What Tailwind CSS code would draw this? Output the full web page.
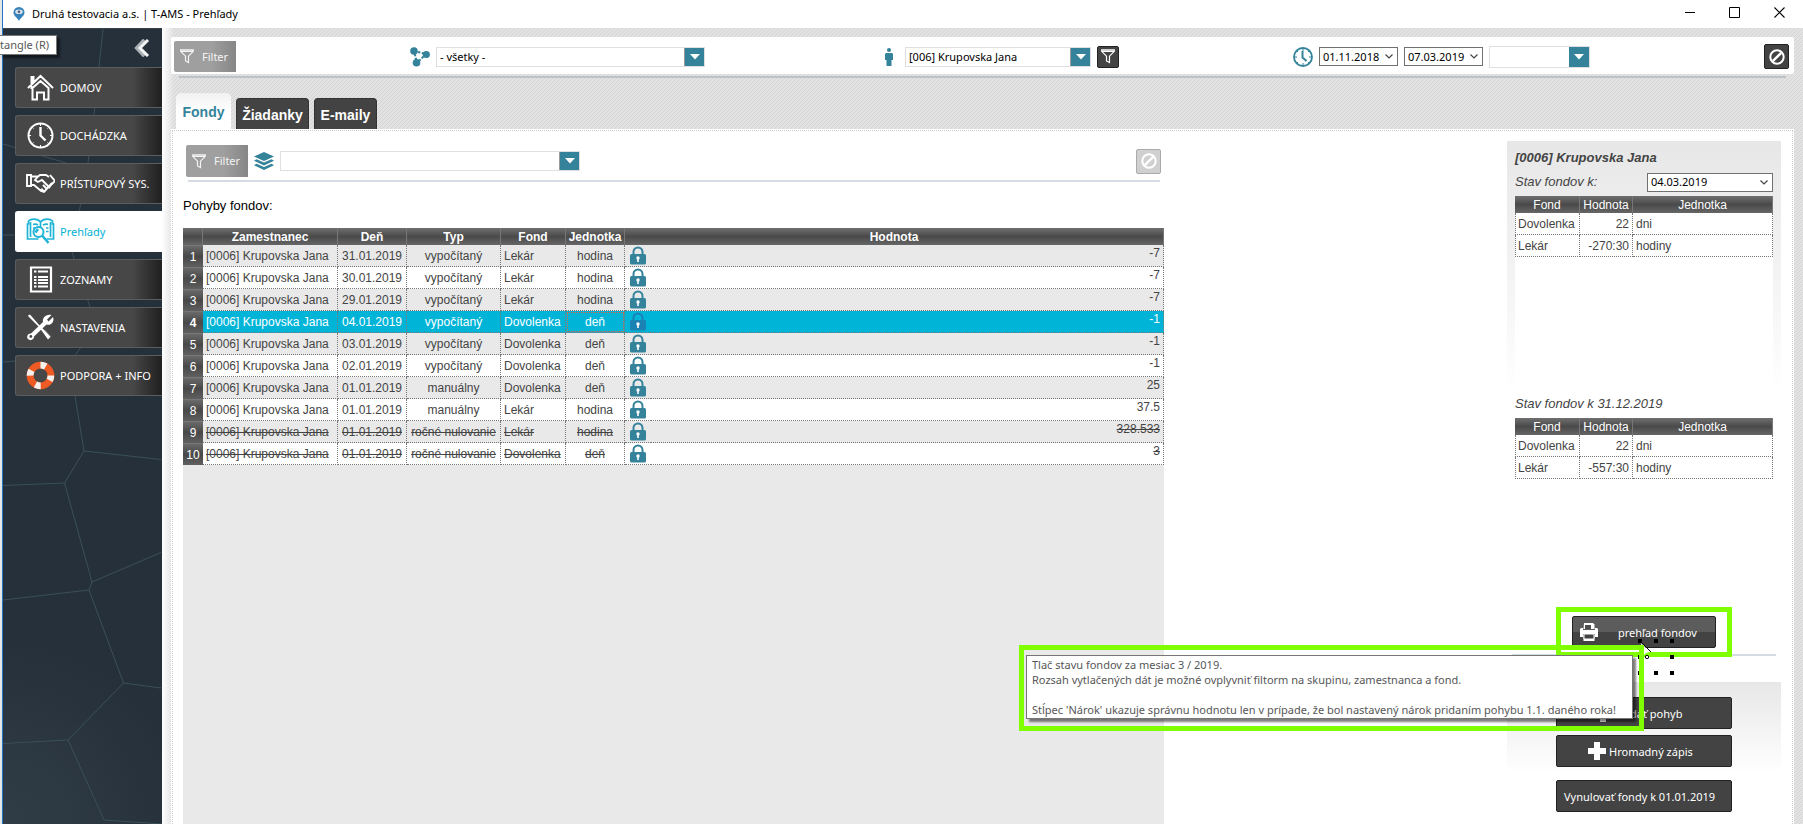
<!DOCTYPE html>
<html lang="sk">
<head>
<meta charset="utf-8">
<title>Druhá testovacia a.s. | T-AMS - Prehľady</title>
<script src="https://cdn.jsdelivr.net/npm/@tailwindcss/browser@4"></script>
</head>
<body class="font-['Noto_Sans',sans-serif] text-[11px] leading-4 text-black">
<svg class="hidden" aria-hidden="true">
  <symbol id="lock" viewBox="0 0 16 19"><path d="M3.500 9V6a4.500 4.500 0 0 1 9 0v3" fill="none" stroke="currentColor" stroke-width="2"/><rect x="0" y="8" width="16" height="10.500" rx="1.500" fill="currentColor"/><circle cx="8" cy="12" r="1.700" fill="#fff"/><path d="M7.200 12h1.600v4H7.200z" fill="#fff"/></symbol>
  <symbol id="funnel" viewBox="0 0 14 15"><path d="M.7.8h12.600v1.500L8.500 7.200v6.300l-3-1.500V7.200L.7 2.300z M1 2.400h12" fill="none" stroke="currentColor" stroke-width="1.200"/></symbol>
  <symbol id="ban" viewBox="0 0 16 16"><circle cx="8" cy="8" r="6.700" fill="none" stroke="currentColor" stroke-width="2"/><path d="M3.800 12.200 12.200 3.800" stroke="currentColor" stroke-width="2.400"/></symbol>
  <symbol id="tri" viewBox="0 0 10 6"><path d="M0 0h10L5 5.500z" fill="#fff"/></symbol>
  <symbol id="chev" viewBox="0 0 8 5"><path d="M.5.500 4 4 7.500.500" fill="none" stroke="#444" stroke-width="1.200"/></symbol>
  <symbol id="plus" viewBox="0 0 18 18"><path d="M6 0h6v6h6v6h-6v6H6v-6H0V6h6z" fill="#fff"/></symbol>
</svg>
<div class="flex min-h-screen">
  <div class="w-[3px] shrink-0 border-r border-[#1f74c4] bg-[#e6e6e6]"></div>
  <div class="flex min-w-0 flex-1 flex-col">
    <header class="flex h-7 items-center bg-white pl-[10px] pr-[18px]">
      <svg class="h-[14px] w-3" viewBox="0 0 12 14"><path d="M6 0a5.500 5.500 0 0 1 5.500 5.500C11.500 9 7 11 6 14 5 11 .5 9 .5 5.500A5.500 5.500 0 0 1 6 0z" fill="#3683ba"/><ellipse cx="6" cy="4.800" rx="3.800" ry="2.300" fill="#d8e4ea"/><circle cx="6" cy="4.800" r="1.300" fill="#557"/></svg>
      <h1 class="ml-[7px] whitespace-nowrap pb-px text-[11px] leading-5">Druhá testovacia a.s. | T-AMS - Prehľady</h1>
      <div class="ml-auto flex gap-[34px] pb-1">
        <button aria-label="Minimalizovať"><svg class="size-[11px]" viewBox="0 0 11 11"><path d="M1 5.500h10" stroke="#000"/></svg></button>
        <button aria-label="Maximalizovať"><svg class="size-[11px]" viewBox="0 0 11 11"><path d="M.5.500h10v10H.5z" fill="none" stroke="#000"/></svg></button>
        <button aria-label="Zavrieť"><svg class="size-[11px]" viewBox="0 0 11 11"><path d="m.5.500 10 10m0-10-10 10" stroke="#000" stroke-width="1.100"/></svg></button>
      </div>
    </header>
    <div class="flex flex-1">
      <nav class="relative w-[159px] shrink-0 overflow-hidden border-t border-[#39434d] bg-[radial-gradient(circle_at_0%_100%,#303d47,#26303b_180px)] pl-3 pt-[10px]" aria-label="Hlavné menu">
        <svg class="absolute left-0 top-0 h-[795px] w-[159px]" viewBox="3 29 159 795" fill="none" stroke="#3b5057"><path d="M103 29 99 67 94 115 88 163 72 252 90 307 94 330 70 362 75 396 84 451 161 459.500M84 451 64.500 483 3 485.500M64.500 483 92 582 161 552.500M92 582l-3 8L3 600M89 590l34.500 93 37.500 5M123.500 683 68 740 3 743.500M68 740l36 80 58 4M3 144l63 19M3 235h12M3 362l12-1"/></svg>
        <div class="relative flex flex-col">
          <button class="mr-[12px] self-end" aria-label="Zbaliť menu"><svg class="h-[18px] w-4" viewBox="0 0 16 18"><path d="M10.500 1 3 9l7.500 8" fill="none" stroke="#aab0b5" stroke-width="4"/><path d="M14 1 6 9l8 8" fill="none" stroke="#f2f2f2" stroke-width="3"/></svg></button>
          <div class="mt-[10px] flex flex-col gap-[7px] text-white [&>a]:flex [&>a]:h-[41px] [&>a]:items-center [&>a]:gap-[5px] [&>a]:rounded-l-[3px] [&>a]:border [&>a]:border-r-0 [&>a]:pl-[10px] [&_span]:whitespace-nowrap [&_span]:pt-px [&_svg]:size-[29px]">
            <a href="#" class="border-[#5b5d60] bg-linear-to-r from-[#474747] from-80% to-[#202020]"><svg viewBox="0 0 29 29"><path d="M2 15 14.500 3 27 15M5.500 16V4h2v6M6.500 15v11.500h4.500v-7h7v7h4.500V15L14.500 8z" fill="none" stroke="#fff" stroke-width="2"/></svg><span>DOMOV</span></a>
            <a href="#" class="border-[#5b5d60] bg-linear-to-r from-[#474747] from-80% to-[#202020]"><svg viewBox="0 0 29 29"><circle cx="14.500" cy="14.500" r="12" fill="none" stroke="#fff" stroke-width="2"/><path d="M14.500 6v8.500l5 5" fill="none" stroke="#fff" stroke-width="2.400"/><path d="M14.500 3v2M14.500 24v2M3 14.500h2M24 14.500h2M6.500 6.500l1 1M21.500 21.500l1 1M22.500 6.500l-1 1M6.500 22.500l1-1" stroke="#fff"/></svg><span>DOCHÁDZKA</span></a>
            <a href="#" class="border-[#5b5d60] bg-linear-to-r from-[#474747] from-80% to-[#202020]"><svg viewBox="0 0 29 29"><path d="M1 6h4v11H1zM5 7.500h7l2-1.500h6l3 2M5 16h3l7 6 3 1 8-9M12 7.500 9 11l3 2 4-2 8 8M24 6l5 6-5 5M15 22l2-2M18 23l-3-3M21 20l-4-4" fill="none" stroke="#fff" stroke-width="1.900"/></svg><span>PRÍSTUPOVÝ SYS.</span></a>
            <a href="#" aria-current="page" class="border-white bg-white text-[#00b1d5]"><svg viewBox="0 0 29 29" fill="none" stroke="#1db4d6" stroke-width="2"><path d="M14.500 5C11 1 5 1.500 2.500 4v3H1.500v15h11M14.500 5C18 1 24 1.500 26.500 4v3h1v15h-7M4.500 20V5M24.500 20V5M14.500 5v5M7 7.500q3-1 5 .5M7 11h2M17 8q3-1.500 5-.5M20 11h2.500M20 14.500h2.500" stroke-width="1.700"/><circle cx="12.500" cy="15" r="5"/><path d="m9.500 15.500 2.500-3.500M16.500 19l6 7" stroke-width="2.500"/></svg><span>Prehľady</span></a>
            <a href="#" class="border-[#5b5d60] bg-linear-to-r from-[#474747] from-80% to-[#202020]"><svg viewBox="0 0 29 29"><path d="M5 2.500h20v24H5z" fill="none" stroke="#fff" stroke-width="2.200"/><path d="M8 6.500h2.500M12 6.500h10M8 12h2.500M12 12h10M8 15h2.500M12 15h10M8 18h2.500M12 18h10M8 21.500h2.500M12 21.500h10" stroke="#fff" stroke-width="1.800"/></svg><span>ZOZNAMY</span></a>
            <a href="#" class="border-[#5b5d60] bg-linear-to-r from-[#474747] from-80% to-[#202020]"><svg viewBox="0 0 29 29"><path d="M2 2.500 4 1.500 14 13l11 10.500-3 3L13 14 2 3z" fill="#fff"/><path d="M19 17l6 7" stroke="#777" stroke-width="1"/><path d="M25.500 2 21 6.500l1.500 2 4.500-4.500c2 5-2.500 9-6.500 7.500L8 23.500c.5 3-4 5-6 2.500s0-6 3-5.500L17 9c-1-4 3-8.500 8.500-7z" fill="#fff"/><circle cx="4.800" cy="23.500" r="1.400" fill="#474747"/></svg><span>NASTAVENIA</span></a>
            <a href="#" class="border-[#5b5d60] bg-linear-to-r from-[#474747] from-80% to-[#202020]"><svg viewBox="0 0 29 29"><circle cx="14.500" cy="14.500" r="10.400" fill="none" stroke="#ee5a24" stroke-width="6.800"/><circle cx="14.500" cy="14.500" r="10.400" fill="none" stroke="#f4f1ee" stroke-width="6.800" stroke-dasharray="5.500 10.836" stroke-dashoffset="-16"/></svg><span>PODPORA + INFO</span></a>
          </div>
        </div>
      </nav>
      <main class="flex min-w-0 flex-1 flex-col bg-[linear-gradient(90deg,#fff,transparent_12px),linear-gradient(135deg,#d4d4d4_12.5%,#e2e2e2_12.5%_50%,#d4d4d4_50%_62.5%,#e2e2e2_62.5%)] bg-[length:100%_100%,4px_4px] pl-[9px] pr-[9px] pt-[9px]">
        <div class="flex h-[37px] items-center rounded-[2px] bg-white pl-[3px] pr-[5px] pt-[2px]">
          <button class="flex h-[31px] w-[62px] items-center gap-2 rounded-l-[2px] bg-linear-to-r from-[#9f9f9f] from-60% to-[#868686] pl-[6px] text-[#f4f4f4]"><svg class="h-[15px] w-[14px]"><use href="#funnel"/></svg>Filter</button>
          <svg class="ml-[174px] size-5" viewBox="0 0 20 20" fill="#34839b"><path d="M4 4 16 7 7 16z" fill="none" stroke="#34839b" stroke-width="2" stroke-dasharray="2.500 1.500"/><circle cx="4" cy="4" r="3.800"/><circle cx="16.300" cy="7.500" r="3.600"/><circle cx="6.500" cy="15.800" r="3.800"/></svg>
          <div class="ml-[6px] flex h-5 w-[269px] border border-[#dfdfdf]"><select aria-label="Skupina" class="min-w-0 flex-1 appearance-none pl-[3px] pt-px leading-4 outline-none"><option>- všetky -</option></select><span class="flex w-5 items-center justify-center border-l border-[#999] bg-[#34839b]"><svg class="h-[6px] w-[10px]"><use href="#tri"/></svg></span></div>
          <svg class="ml-[180px] h-[18px] w-2" viewBox="0 0 8 18" fill="#34839b"><circle cx="4" cy="2" r="2"/><path d="M1 5h6l1 1v6H6.500v6h-5v-6H0V6z"/></svg>
          <div class="ml-[12px] flex h-5 w-[186px] border border-[#dfdfdf]"><select aria-label="Zamestnanec" class="min-w-0 flex-1 appearance-none pl-[3px] pt-px leading-4 outline-none"><option>[006] Krupovska Jana</option></select><span class="flex w-5 items-center justify-center border-l border-[#999] bg-[#34839b]"><svg class="h-[6px] w-[10px]"><use href="#tri"/></svg></span></div>
          <button aria-label="Filter zamestnancov" class="ml-[6px] flex size-[22px] items-center justify-center rounded-[2px] border border-[#222] bg-[#434343] text-white"><svg class="h-[15px] w-[14px]"><use href="#funnel"/></svg></button>
          <svg class="ml-[174px] size-5" viewBox="0 0 20 20" fill="none" stroke="#34839b"><circle cx="10" cy="10" r="9" stroke-width="1.800"/><path d="M9.500 4v6.500l4 3.500" stroke-width="2"/><path d="M10 1v3M10 16v3M1 10h3M16 10h3M3.500 3.500 5 5M15 15l1.500 1.500M16.500 3.500 15 5M3.500 16.500 5 15"/></svg>
          <div class="ml-[6px] flex h-[19px] w-[79px] items-center border border-[#707070] pr-1"><select aria-label="Dátum od" class="min-w-0 flex-1 appearance-none pl-[3px] leading-4 outline-none"><option>01.11.2018</option></select><svg class="h-[5px] w-2"><use href="#chev"/></svg></div>
          <div class="ml-[6px] flex h-[19px] w-[79px] items-center border border-[#707070] pr-1"><select aria-label="Dátum do" class="min-w-0 flex-1 appearance-none pl-[3px] leading-4 outline-none"><option>07.03.2019</option></select><svg class="h-[5px] w-2"><use href="#chev"/></svg></div>
          <div class="ml-[6px] flex h-[22px] w-[101px] border border-[#dfdfdf]"><select aria-label="Obdobie" class="min-w-0 flex-1 appearance-none outline-none"><option></option></select><span class="flex w-5 items-center justify-center bg-[#34839b]"><svg class="h-[6px] w-[10px]"><use href="#tri"/></svg></span></div>
          <button aria-label="Zrušiť filter" class="ml-auto flex size-[25px] items-center justify-center rounded-[2px] border border-[#222] bg-[#434343] text-white"><svg class="size-4"><use href="#ban"/></svg></button>
        </div>
        <div class="mx-2 mt-[2px] h-[2px] bg-[#bcc3c8]"></div>
        <div role="tablist" class="mt-[15px] flex items-end gap-[5px] pl-[5px] font-['Liberation_Sans',sans-serif] text-[14px] font-bold text-white">
          <button role="tab" aria-selected="true" class="h-9 w-[55px] rounded-t-[5px] bg-linear-to-b from-[#f1f1f1] to-white to-50% pt-[2px] text-[#34839b]">Fondy</button>
          <button role="tab" aria-selected="false" class="h-[31px] w-[73px] rounded-t-[4px] border border-b-0 border-[#333] bg-[#434343] pt-[2px]">Žiadanky</button>
          <button role="tab" aria-selected="false" class="h-[31px] w-[63px] rounded-t-[4px] border border-b-0 border-[#333] bg-[#434343] pt-[2px]">E-maily</button>
        </div>
        <div class="flex flex-1 bg-white px-px pt-px">
          <div class="grid flex-1 grid-cols-[minmax(0,981fr)_343fr_274px] border border-b-0 border-dotted border-[#ccc] pl-[10px] pr-[11px]">
            <section class="flex flex-col pt-[13px]">
              <div class="flex h-[34px] items-center pl-[3px] pr-[3px]">
                <button class="flex h-8 w-[62px] items-center gap-2 rounded-l-[2px] bg-linear-to-r from-[#9f9f9f] from-60% to-[#868686] pl-[6px] text-[#f4f4f4]"><svg class="h-[15px] w-[14px]"><use href="#funnel"/></svg>Filter</button>
                <svg class="ml-[6px] h-[18px] w-5" viewBox="0 0 20 18" fill="#34839b"><path d="M10 0 20 4.500 10 9 0 4.500z"/><path d="m2.500 7.200 7.500 3.300 7.500-3.300L20 8.800 10 13.500 0 8.800zM2.500 11.700l7.500 3.300 7.500-3.300 2.500 1.600L10 18 0 13.300z"/></svg>
                <div class="ml-[6px] flex h-5 w-[300px] border border-[#dfdfdf]"><select aria-label="Fond" class="min-w-0 flex-1 appearance-none outline-none"><option></option></select><span class="flex w-5 items-center justify-center border-l border-[#999] bg-[#34839b]"><svg class="h-[6px] w-[10px]"><use href="#tri"/></svg></span></div>
                <button disabled aria-label="Zrušiť filter fondov" class="ml-auto flex size-[25px] items-center justify-center rounded-[2px] border border-[#aaa] bg-[#d0d0d0] text-white"><svg class="size-4"><use href="#ban"/></svg></button>
              </div>
              <div class="ml-[5px] mr-1 mt-[2px] h-[2px] bg-[#d5dbe2]"></div>
              <h2 class="mb-[14px] mt-[16px] font-['Liberation_Sans',sans-serif] text-[13px] leading-4">Pohyby fondov:</h2>
              <div class="flex-1 bg-[#e9e9e9]">
                <table class="w-full table-fixed border-separate border-spacing-0 text-center font-['Liberation_Sans',sans-serif] text-[12px] leading-4 text-[#444] [&_tbody_td]:h-[22px] [&_tbody_td]:border-b [&_tbody_td]:border-dotted [&_tbody_td]:border-[#777] [&_td]:overflow-hidden [&_td]:whitespace-nowrap [&_tbody_th]:border-t [&_tbody_th]:border-[#777] [&_tbody_th]:bg-linear-to-b [&_tbody_th]:from-[#6a6a6a] [&_tbody_th]:via-[#484848] [&_tbody_th]:to-[#606060] [&_tbody_th]:font-normal [&_tbody_th]:text-white [&_td:nth-child(-n+6)]:border-r [&_td:nth-child(2)]:pl-[3px] [&_td:nth-child(2)]:text-left [&_td:nth-child(5)]:pl-[3px] [&_td:nth-child(5)]:text-left [&_td:nth-child(8)]:border-r [&_td:nth-child(8)]:pr-[3px] [&_td:nth-child(8)]:align-top [&_td:nth-child(8)]:text-right [&_td:nth-child(8)]:leading-4 [&_svg]:mx-auto [&_svg]:h-[19px] [&_svg]:w-4 [&_svg]:text-[#34839b] [&_tbody_tr:nth-child(even)]:bg-white">
                  <colgroup><col class="w-5"><col class="w-[135px]"><col class="w-[69px]"><col class="w-[94px]"><col class="w-[65px]"><col class="w-[59px]"><col class="w-[26px]"><col></colgroup>
                  <thead><tr class="h-[17px] text-white [&>*]:bg-linear-to-b [&>*]:from-[#707070] [&>*]:via-[#4a4a4a] [&>*]:to-[#666] [&>*]:border-r [&>*]:border-[#777]"><td></td><th>Zamestnanec</th><th>Deň</th><th>Typ</th><th>Fond</th><th>Jednotka</th><th colspan="2">Hodnota</th></tr></thead>
                  <tbody>
                    <tr><th>1</th><td>[0006] Krupovska Jana</td><td>31.01.2019</td><td>vypočítaný</td><td>Lekár</td><td>hodina</td><td><svg><use href="#lock"/></svg></td><td>-7</td></tr>
                    <tr><th>2</th><td>[0006] Krupovska Jana</td><td>30.01.2019</td><td>vypočítaný</td><td>Lekár</td><td>hodina</td><td><svg><use href="#lock"/></svg></td><td>-7</td></tr>
                    <tr><th>3</th><td>[0006] Krupovska Jana</td><td>29.01.2019</td><td>vypočítaný</td><td>Lekár</td><td>hodina</td><td><svg><use href="#lock"/></svg></td><td>-7</td></tr>
                    <tr class="bg-[#00b4d8]! text-white [&>th]:font-bold! [&_svg]:text-[#1b82b4]!"><th>4</th><td>[0006] Krupovska Jana</td><td>04.01.2019</td><td>vypočítaný</td><td>Dovolenka</td><td class="outline outline-dotted outline-[#e0603a] -outline-offset-2">deň</td><td><svg><use href="#lock"/></svg></td><td>-1</td></tr>
                    <tr><th>5</th><td>[0006] Krupovska Jana</td><td>03.01.2019</td><td>vypočítaný</td><td>Dovolenka</td><td>deň</td><td><svg><use href="#lock"/></svg></td><td>-1</td></tr>
                    <tr><th>6</th><td>[0006] Krupovska Jana</td><td>02.01.2019</td><td>vypočítaný</td><td>Dovolenka</td><td>deň</td><td><svg><use href="#lock"/></svg></td><td>-1</td></tr>
                    <tr><th>7</th><td>[0006] Krupovska Jana</td><td>01.01.2019</td><td>manuálny</td><td>Dovolenka</td><td>deň</td><td><svg><use href="#lock"/></svg></td><td>25</td></tr>
                    <tr><th>8</th><td>[0006] Krupovska Jana</td><td>01.01.2019</td><td>manuálny</td><td>Lekár</td><td>hodina</td><td><svg><use href="#lock"/></svg></td><td>37.5</td></tr>
                    <tr class="[&>td]:line-through"><th>9</th><td>[0006] Krupovska Jana</td><td>01.01.2019</td><td>ročné nulovanie</td><td>Lekár</td><td>hodina</td><td><svg><use href="#lock"/></svg></td><td>328.533</td></tr>
                    <tr class="[&>td]:line-through"><th>10</th><td>[0006] Krupovska Jana</td><td>01.01.2019</td><td>ročné nulovanie</td><td>Dovolenka</td><td>deň</td><td><svg><use href="#lock"/></svg></td><td>3</td></tr>
                  </tbody>
                </table>
              </div>
            </section>
            <aside class="col-start-3 flex flex-col pt-[10px]">
              <div class="flex flex-col bg-linear-to-b from-[#e7e7e7] to-white to-75% px-2 pt-[7px] font-['Liberation_Sans',sans-serif] text-[#444]">
                <h2 class="text-[13px] font-bold italic leading-5">[0006] Krupovska Jana</h2>
                <div class="mt-1 flex h-5 items-center justify-between">
                  <label for="stav" class="text-[13px] italic">Stav fondov k:</label>
                  <div class="flex h-[19px] w-[126px] items-center border border-[#707070] bg-white pr-1"><select id="stav" class="min-w-0 flex-1 appearance-none pl-[3px] font-['Noto_Sans',sans-serif] text-[11px] leading-4 text-black outline-none"><option>04.03.2019</option></select><svg class="h-[5px] w-2"><use href="#chev"/></svg></div>
                </div>
                <div class="mt-1 h-[192px] bg-white">
                  <table class="w-full table-fixed border-separate border-spacing-0 text-[12px] leading-4 [&_td]:h-[22px] [&_td]:border-b [&_td]:border-r [&_td]:border-dotted [&_td]:border-[#777] [&_td]:px-[3px] [&_td:first-child]:border-l [&_td:first-child]:px-[2px] [&_td:nth-child(2)]:text-right [&_th]:h-[17px] [&_th]:border-r [&_th]:border-[#777] [&_th]:bg-linear-to-b [&_th]:from-[#707070] [&_th]:via-[#4a4a4a] [&_th]:to-[#666] [&_th]:text-center [&_th]:font-normal [&_th]:text-white">
                    <colgroup><col class="w-[65px]"><col class="w-[53px]"><col></colgroup>
                    <thead><tr><th>Fond</th><th>Hodnota</th><th>Jednotka</th></tr></thead>
                    <tbody><tr><td>Dovolenka</td><td>22</td><td>dni</td></tr><tr><td>Lekár</td><td>-270:30</td><td>hodiny</td></tr></tbody>
                  </table>
                </div>
                <h3 class="mt-[6px] text-[13px] italic leading-5">Stav fondov k 31.12.2019</h3>
                <table class="mt-1 w-full table-fixed border-separate border-spacing-0 bg-white text-[12px] leading-4 [&_td]:h-[22px] [&_td]:border-b [&_td]:border-r [&_td]:border-dotted [&_td]:border-[#777] [&_td]:px-[3px] [&_td:first-child]:border-l [&_td:first-child]:px-[2px] [&_td:nth-child(2)]:text-right [&_th]:h-[17px] [&_th]:border-r [&_th]:border-[#777] [&_th]:bg-linear-to-b [&_th]:from-[#707070] [&_th]:via-[#4a4a4a] [&_th]:to-[#666] [&_th]:text-center [&_th]:font-normal [&_th]:text-white">
                  <colgroup><col class="w-[65px]"><col class="w-[53px]"><col></colgroup>
                  <thead><tr><th>Fond</th><th>Hodnota</th><th>Jednotka</th></tr></thead>
                  <tbody><tr><td>Dovolenka</td><td>22</td><td>dni</td></tr><tr><td>Lekár</td><td>-557:30</td><td>hodiny</td></tr></tbody>
                </table>
              </div>
              <div class="relative mt-[128px] flex flex-col">
                <div class="absolute left-[5px] top-[47px] h-[2px] w-[264px] bg-[#d5dbe2]"></div>
                <div class="relative ml-[49px] w-[176px] border-[5px] border-[#80ff00] bg-white px-[11px] py-1">
                  <button class="flex h-8 w-full items-center rounded-[2px] border border-[#222] bg-linear-to-b from-[#5c5c5c] from-50% to-[#434343] to-50% pl-[7px] text-white"><svg class="size-[18px]" viewBox="0 0 18 18"><path d="M4 0h9l1.500 1.500V6h-11z" fill="#fff"/><path d="M5 2h6v4H5z" fill="#4f4f4f"/><path d="M1 5h2v2h12V5h2l1 1v8h-3v-3H3v3H0V6zM3.500 12h11v6h-11z" fill="#fff"/><path d="M4 11h10v5H4z" fill="#434343" stroke="#fff"/></svg><span class="ml-[20px] pt-px">prehľad fondov</span></button>
                </div>
                <div class="mt-[25px] flex flex-col bg-linear-to-b from-[#e7e7e7] to-white px-[49px] pb-[6px] pt-[15px]">
                  <button class="flex h-8 items-center rounded-[2px] border border-[#222] bg-[#434343] pl-[37px] text-white"><svg class="size-[18px]"><use href="#plus"/></svg><span class="ml-1 pt-px">Pridať pohyb</span></button>
                  <button class="mt-[6px] flex h-8 items-center rounded-[2px] border border-[#222] bg-[#434343] pl-[31px] text-white"><svg class="size-[18px]"><use href="#plus"/></svg><span class="ml-[3px] pt-px">Hromadný zápis</span></button>
                </div>
                <button class="mx-[49px] mt-[7px] h-8 rounded-[2px] border border-[#222] bg-[#434343] pl-[7px] pt-px text-left text-white">Vynulovať fondy k 01.01.2019</button>
                <!-- Selection handles and the mouse pointer -->
                <svg class="absolute left-[131px] top-[32px] h-[37px] w-[36px]" viewBox="0 0 36 37"><path d="M0 0h4v4H0zM16 0h4v4h-4zM32 0h4v4h-4zM0 16h4v4H0zM32 16h4v4h-4zM0 32h4v4H0zM16 32h4v4h-4zM32 32h4v4h-4z"/><path d="m3 4 9 9-4 1-3 3z" fill="#fff"/><path d="m3 3 10 10" stroke="#000"/><circle cx="9" cy="18" r="1.700" fill="#fff" stroke="#000"/></svg>
                <div class="absolute right-[137px] top-[38px] border-[5px] border-[#80ff00] pb-[7px] pl-[2px] pr-[6px] pt-[5px]">
                  <div role="tooltip" class="w-[607px] whitespace-nowrap border border-[#767676] bg-white pb-px pl-[5px] pt-px leading-[15px] text-[#575757] shadow-[3px_3px_2px_rgba(0,0,0,0.5)]">Tlač stavu fondov za mesiac 3 / 2019.<br>Rozsah vytlačených dát je možné ovplyvniť filtorm na skupinu, zamestnanca a fond.<br><br>Stĺpec 'Nárok' ukazuje správnu hodnotu len v prípade, že bol nastavený nárok pridaním pohybu 1.1. daného roka!</div>
                </div>
              </div>
            </aside>
          </div>
        </div>
      </main>
    </div>
  </div>
</div>
<div role="tooltip" class="absolute left-0 top-[35px] h-5 w-[57px] border border-l-0 border-[#767676] bg-white text-[11px] leading-[18px] text-[#575757] shadow-[3px_3px_2px_rgba(0,0,0,0.5)]">tangle (R)</div>
</body>
</html>
